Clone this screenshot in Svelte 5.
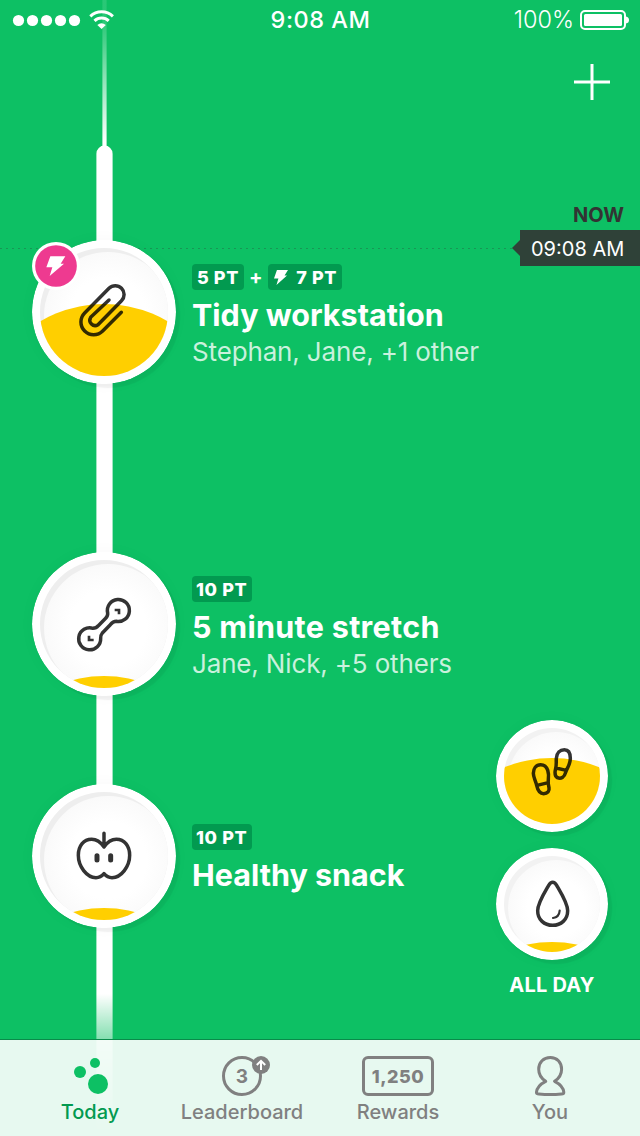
<script>
  const tasks = [
    { id: 'tidy', icon: 'clip', level: 64, title: 'Tidy workstation', people: 'Stephan, Jane, +1 other', points: '5 PT', bonus: '7 PT' },
    { id: 'stretch', icon: 'dumbbell', level: 124, title: '5 minute stretch', people: 'Jane, Nick, +5 others', points: '10 PT' },
    { id: 'snack', icon: 'apple', level: 124, title: 'Healthy snack', points: '10 PT' }
  ];
  const allDay = [
    { icon: 'steps', level: 38 },
    { icon: 'drop', level: 94 }
  ];
</script>

{#snippet glyph(name)}
  {#if name === 'clip'}
    <g transform="scale(.33333) translate(-36 -30)">
      <path d="M304 247L248 303A38 38 0 0 1 194 249L267 175A26.5 26.5 0 0 1 304.5 212.5L234 284A16 16 0 0 1 212 262L267 210" />
    </g>
  {:else if name === 'dumbbell'}
    <g transform="scale(.33333) translate(-36 -35)">
      <path d="M263 218C264 226 261 230 257 234L235 256C231 261 226 264 219 264A33 33 0 1 0 242 294C241 288 243 283 247 278L271 253C275 248 281 243 289 243A33 33 0 1 0 263 218Z" />
      <path class="mark" d="M284 209H297V222M207 286V299H221" />
    </g>
  {:else if name === 'apple'}
    <g transform="scale(.33333) translate(-36 -28)">
      <path d="M252 217C240 200 226 194 215 194C190 194 175 215 175 242C175 275 200 309 228 309C238 309 246 304 252 297C258 304 266 309 276 309C304 309 329 275 329 242C329 215 314 194 289 194C278 194 264 200 252 217ZM252 176V212" />
      <path class="seed" d="M231 243V256M272 243V256" />
    </g>
  {:else if name === 'steps'}
    <g transform="scale(.33333) translate(-48 -30)">
      <path d="M182 164C168 164 160 176 160 190C160 202 167 212 170 226C173 240 178 251 191 251C203 251 209 243 207 233C205 226 203 220 205 208C207 195 206 164 182 164ZM171 226L205 218" />
      <path d="M253 119C240 119 230 128 229 145C228 156 230 163 227 175C224 187 224 198 232 203C243 208 253 202 257 187C260 175 271 165 271 145C271 128 264 119 253 119ZM228 174L259 181" />
    </g>
  {:else}
    <g transform="scale(.33333) translate(-48 -414)">
      <path d="M218 517C212 517 209 521 206 526C192 550 173 580 173 602C173 629 193 646 218 646C243 646 263 629 263 602C263 580 244 550 230 526C227 521 224 517 218 517Z" />
      <path class="thin" d="M219 624C230 623 238 615 239 602" />
    </g>
  {/if}
{/snippet}

{#snippet dial(id, size, level, icon)}
  {@const c = size / 2}
  <svg class="dial" width={size} height={size} viewBox="0 0 {size} {size}">
    <defs>
      <clipPath id="well-{id}"><circle cx={c} cy={c} r={c - 8} /></clipPath>
      <radialGradient id="shade-{id}">
        <stop offset=".6" stop-color="#fff" />
        <stop offset="1" stop-color="#fafafa" />
      </radialGradient>
    </defs>
    <circle cx={c} cy={c} r={c} fill="#fff" />
    <g clip-path="url(#well-{id})">
      <rect width={size} height={size} fill={size > 120 ? '#eee' : '#f2f2f2'} />
      <circle cx={c + 4} cy={c + 4} r={c - 8} fill="url(#shade-{id})" />
      <circle cx={c} cy={level + 126} r="126" fill="#ffcf00" />
    </g>
    <g class="ink">{@render glyph(icon)}</g>
  </svg>
{/snippet}

{#snippet bolt()}
  <path d="M91 79H136L122 101H132L89 138L97 112H79Z" />
{/snippet}

<div class="screen">
  <svg class="line" width="18" height="1136" viewBox="0 0 18 1136">
    <defs>
      <linearGradient id="thread" x1="0" y1="0" x2="0" y2="150" gradientUnits="userSpaceOnUse">
        <stop offset=".13" stop-color="#fff" stop-opacity=".12" />
        <stop offset=".27" stop-color="#fff" stop-opacity=".25" />
        <stop offset=".94" stop-color="#fff" />
      </linearGradient>
      <linearGradient id="rail" x1="0" y1="994" x2="0" y2="1134" gradientUnits="userSpaceOnUse">
        <stop offset="0" stop-color="#fff" />
        <stop offset=".32" stop-color="#fff" stop-opacity=".5" />
        <stop offset="1" stop-color="#fff" stop-opacity="0" />
      </linearGradient>
    </defs>
    <rect x="6.4" width="4.2" height="147" fill="url(#thread)" />
    <path d="M.4 1136V153.7A8.1 8.1 0 0 1 16.6 153.7V1136Z" fill="url(#rail)" />
  </svg>

  <div class="status">
    <div class="signal">
      <svg width="104" height="24" viewBox="0 0 104 24" fill="#fff">
        {#each [0, 1, 2, 3, 4] as n}
          <circle cx={6.5 + n * 14} cy="12.5" r="5.6" />
        {/each}
        <path d="M78.3 8.3A16.6 16.6 0 0 1 100.9 8.3M82.5 12.9A10.2 10.2 0 0 1 96.7 12.9" fill="none" stroke="#fff" stroke-width="3" />
        <path d="M85.3 17Q89.5 13.4 93.8 17L89.6 21Z" />
      </svg>
    </div>
    <span class="clock">9:08 AM</span>
    <div class="power">
      <span>100%</span>
      <svg width="50" height="20" viewBox="0 0 50 20">
        <rect x="1" y="1" width="44" height="18" rx="4" fill="none" stroke="#fff" stroke-width="2" />
        <rect x="4" y="4" width="38" height="12" rx="1.5" fill="#fff" />
        <path d="M46 6.5Q49 7 49 10Q49 13 46 13.5Z" fill="#fff" />
      </svg>
    </div>
  </div>

  <div class="toolbar">
    <svg width="36" height="36" viewBox="0 0 36 36">
      <path d="M18 0V36M0 18H36" stroke="#fff" stroke-width="3" />
    </svg>
  </div>

  <div class="now">
    <div class="now-label">NOW</div>
    <div class="now-time">09:08 AM</div>
  </div>

  <div class="board">
    <div class="tasks">
      {#each tasks as t}
        <div class="task {t.id}">
          <div class="token">
            {@render dial(t.id, 144, t.level, t.icon)}
            {#if t.bonus}
              <svg class="boost" width="48" height="48" viewBox="36 36 144 144">
                <circle cx="108" cy="108" r="72" fill="#fff" />
                <circle cx="108" cy="108" r="62.5" fill="#ee3a90" />
                <g fill="#fff">{@render bolt()}</g>
              </svg>
            {/if}
          </div>
          <div class="info">
            <div class="points">
              <span class="pill">{t.points}</span>
              {#if t.bonus}
                <span class="plus">+</span>
                <span class="pill bonus">
                  <svg width="14" height="15" viewBox="79 79 57 59" preserveAspectRatio="none" fill="#fff">{@render bolt()}</svg>
                  {t.bonus}
                </span>
              {/if}
            </div>
            <div class="title">{t.title}</div>
            {#if t.people}<div class="people">{t.people}</div>{/if}
          </div>
        </div>
      {/each}
    </div>
    <div class="all-day">
      {#each allDay as a}
        {@render dial(a.icon, 112, a.level, a.icon)}
      {/each}
      <div class="all-day-label">ALL DAY</div>
    </div>
  </div>

  <div class="tabs">
    <div class="tab active">
      <svg width="36" height="40" viewBox="0 0 36 40" fill="#0dc064">
        <circle cx="8" cy="16" r="6" />
        <circle cx="23" cy="7" r="5" />
        <circle cx="26" cy="28" r="10" />
      </svg>
      <span>Today</span>
    </div>
    <div class="tab">
      <div class="rank">
        <span>3</span>
        <svg class="up" width="18" height="18" viewBox="0 0 18 18">
          <circle cx="9" cy="9" r="9" fill="#808080" />
          <path d="M9 14V5M4.8 9L9 4.8L13.2 9" fill="none" stroke="#fff" stroke-width="2" />
        </svg>
      </div>
      <span>Leaderboard</span>
    </div>
    <div class="tab">
      <div class="balance">1,250</div>
      <span>Rewards</span>
    </div>
    <div class="tab">
      <svg width="32" height="40" viewBox="0 0 32 40">
        <path d="M11.7 25.3C7 22.3 4.7 18 4.7 13.3C4.7 6.3 9.6 1.5 16.3 1.5C23 1.5 27.6 6.3 27.6 13.3C27.6 18 25.3 22.3 20.6 25.3C26 28 29.3 31 29.8 36.2C29.8 37.6 29 38 27.5 38.1C20 38.8 12.5 38.8 4.8 38.1C3.2 38 2.4 37.6 2.5 36.2C3 31 6.3 28 11.7 25.3Z" fill="none" stroke="#808080" stroke-width="3" stroke-linejoin="round" />
      </svg>
      <span>You</span>
    </div>
  </div>
</div>

<style>
  :global(body) { margin: 0; }
  .screen {
    position: relative;
    display: flex;
    flex-direction: column;
    width: 640px;
    height: 1136px;
    overflow: hidden;
    background: #0dc064;
    color: #fff;
    font-family: Inter, "Liberation Sans", sans-serif;
    white-space: nowrap;
  }
  svg { display: block; flex: none; }
  .line { position: absolute; left: 96px; top: 0; }
  .status {
    position: relative;
    display: grid;
    grid-template-columns: 1fr auto 1fr;
    align-items: center;
    height: 40px;
    padding: 0 10px 0 12px;
    line-height: 40px;
  }
  .clock { margin-left: -1px; font-size: 23.5px; font-weight: 500; letter-spacing: .5px; }
  .power { display: flex; align-items: center; justify-content: flex-end; gap: 6px; font-size: 23.5px; font-weight: 300; }
  .toolbar { display: flex; justify-content: flex-end; box-sizing: border-box; padding: 24px 30px 0 0; height: 176px; }
  .now {
    position: absolute;
    top: 204px;
    left: 0;
    width: 640px;
    display: flex;
    flex-direction: column;
    align-items: flex-end;
  }
  .now::before {
    content: "";
    position: absolute;
    left: 0;
    top: 44px;
    width: 512px;
    height: 1px;
    background: repeating-linear-gradient(90deg, rgba(51,51,51,.3) 0 2px, transparent 2px 6px);
  }
  .now-label { color: #333; font-size: 20px; font-weight: 700; line-height: 23px; height: 26px; padding-right: 16px; }
  .now-time {
    position: relative;
    box-sizing: border-box;
    width: 120px;
    height: 36px;
    padding-left: 11px;
    background: #2f4138;
    font-size: 20px;
    line-height: 38px;
  }
  .now-time::before {
    content: "";
    position: absolute;
    left: -8px;
    top: 10px;
    border: 8px solid transparent;
    border-left: 0;
    border-right-color: #2f4138;
  }
  .board { position: relative; display: flex; justify-content: space-between; height: 823px; padding: 24px 32px 0; box-sizing: border-box; }
  .task { display: flex; gap: 16px; height: 144px; }
  .stretch { margin-top: 168px; }
  .snack { margin-top: 88px; }
  .stretch .token { margin-top: -.5px; }
  .token { position: relative; }
  .dial { border-radius: 50%; box-shadow: 4px 4px 1px rgba(0,0,0,.05), 0 0 16px rgba(0,0,0,.03); }
  .ink { fill: none; stroke: rgba(0,0,0,.8); stroke-width: 10.5; stroke-linecap: round; stroke-linejoin: round; }
  .mark { stroke-width: 8; stroke-linecap: butt; stroke-linejoin: miter; }
  .seed { stroke-width: 15; }
  .thin { stroke-width: 6.5; }
  .boost { position: absolute; left: 0; top: 2px; }
  .info { padding-top: 24px; }
  .snack .info { padding-top: 40px; }
  .points { display: flex; align-items: center; height: 26px; gap: 5px; font-size: 18px; font-weight: 800; line-height: 27px; letter-spacing: .6px; }
  .pill { display: flex; align-items: center; box-sizing: border-box; min-width: 52px; height: 26px; padding: 0 4.5px 0 5px; border-radius: 4px; background: #029a50; }
  .stretch .pill, .snack .pill { min-width: 60px; padding: 0 4px; }
  .bonus { min-width: 74px; gap: 8px; padding-left: 6px; }
  .plus { font-size: 20px; font-weight: 700; }
  .title { margin-top: 6px; font-size: 30.5px; font-weight: 700; line-height: 38px; }
  .stretch .title { letter-spacing: .3px; }
  .people { font-size: 26px; line-height: 35px; color: rgba(255,255,255,.78); letter-spacing: -.15px; }
  .all-day { display: flex; flex-direction: column; align-items: center; gap: 16px; padding-top: 480px; }
  .all-day-label { margin-top: -3px; font-size: 20px; font-weight: 700; line-height: 25px; letter-spacing: .2px; }
  .tabs {
    position: relative;
    display: grid;
    grid-template-columns: 152px 152px 160px 144px;
    box-sizing: border-box;
    height: 97px;
    margin-top: auto;
    padding: 16px 18px 0 14px;
    border-top: 1px solid #0a8a4a;
    background: rgba(255,255,255,.9);
    color: #808080;
    font-size: 20px;
    font-weight: 500;
  }
  .tab { display: flex; flex-direction: column; align-items: center; line-height: 25px; gap: 4px; }
  .active { color: #029a50; }
  .rank, .balance { box-sizing: border-box; height: 40px; border: 3px solid #808080; text-align: center; line-height: 35px; font-weight: 700; }
  .rank { position: relative; width: 40px; border-radius: 50%; font-size: 19px; }
  .up { position: absolute; right: -11px; top: -3px; }
  .balance { width: 72px; border-radius: 6px; font-weight: 800; font-size: 18px; letter-spacing: .5px; }
</style>
